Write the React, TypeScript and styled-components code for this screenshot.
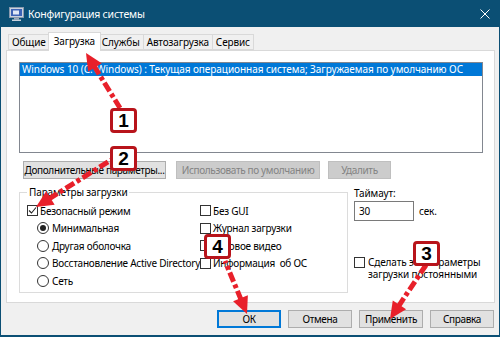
import styled, { createGlobalStyle } from "styled-components";

const GlobalStyle = createGlobalStyle`
  html, body {
    margin: 0;
    padding: 0;
    background: #ffffff;
  }
  body {
    font-family: "Noto Sans", "DejaVu Sans", sans-serif;
  }
`;

const RED = "#e8202a";

type ArrowProps = { x1: number; y1: number; x2: number; y2: number };

function Arrow({ x1, y1, x2, y2 }: ArrowProps) {
  const dx = x2 - x1;
  const dy = y2 - y1;
  const len = Math.hypot(dx, dy);
  const ux = dx / len;
  const uy = dy / len;
  const head = 17;
  const half = 8;
  const bx = x2 - ux * head;
  const by = y2 - uy * head;
  const px = -uy;
  const py = ux;
  return (
    <g>
      <line
        x1={bx + ux * 2}
        y1={by + uy * 2}
        x2={x1}
        y2={y1}
        stroke={RED}
        strokeWidth={5}
        strokeDasharray="10 3 4 3"
      />
      <polygon
        points={`${x2},${y2} ${bx + px * half},${by + py * half} ${bx - px * half},${by - py * half}`}
        fill={RED}
      />
    </g>
  );
}

function CheckBox({ checked }: { checked?: boolean }) {
  return (
    <Box>
      {checked && (
        <svg width="9" height="9" viewBox="0 0 9 9">
          <path d="M1 4.5 L3.5 7 L8 1.5" fill="none" stroke="#222" strokeWidth="1.1" />
        </svg>
      )}
    </Box>
  );
}

function Radio({ checked }: { checked?: boolean }) {
  return <Round>{checked && <Dot />}</Round>;
}

export default function App() {
  return (
    <>
      <GlobalStyle />
      <Window>
        <TitleBar>
          <svg width="15" height="14" viewBox="0 0 15 14">
            <rect x="0.5" y="0.5" width="14" height="10" fill="#c9d3de" stroke="#8a9aae" />
            <rect x="2" y="2" width="11" height="7" fill="#3d63b5" />
            <rect x="4" y="3.5" width="6" height="4" fill="#dfe8f6" />
            <rect x="5" y="11" width="5" height="1.5" fill="#9aa8b8" />
            <rect x="3" y="12.5" width="9" height="1.5" fill="#c9d3de" />
          </svg>
          <Title>Конфигурация системы</Title>
          <svg width="10" height="10" viewBox="0 0 10 10">
            <path d="M0.5 0.5 L9.5 9.5 M9.5 0.5 L0.5 9.5" stroke="#ffffff" strokeWidth="1" />
          </svg>
        </TitleBar>
        <Body>
          <TabStrip>
            <Tab>Общие</Tab>
            <Tab $active>Загрузка</Tab>
            <Tab>Службы</Tab>
            <Tab>Автозагрузка</Tab>
            <Tab>Сервис</Tab>
          </TabStrip>
          <Panel>
            <ListBox>
              <ListRow>
                Windows 10 (C:\Windows) : Текущая операционная система; Загружаемая по умолчанию ОС
              </ListRow>
            </ListBox>
            <ButtonRow>
              <Button $width={143}>Дополнительные параметры...</Button>
              <Button $width={144} disabled>
                Использовать по умолчанию
              </Button>
              <Button $width={63} disabled>
                Удалить
              </Button>
            </ButtonRow>
            <LowerRow>
              <GroupBox>
                <Legend>Параметры загрузки</Legend>
                <GroupColumns>
                  <Column>
                    <OptionRow>
                      <CheckBox checked />
                      <Label>Безопасный режим</Label>
                    </OptionRow>
                    <OptionRow $indent>
                      <Radio checked />
                      <Label $gap>Минимальная</Label>
                    </OptionRow>
                    <OptionRow $indent>
                      <Radio />
                      <Label $gap>Другая оболочка</Label>
                    </OptionRow>
                    <OptionRow $indent>
                      <Radio />
                      <Label $gap>Восстановление Active Directory</Label>
                    </OptionRow>
                    <OptionRow $indent>
                      <Radio />
                      <Label $gap>Сеть</Label>
                    </OptionRow>
                  </Column>
                  <Column>
                    <OptionRow>
                      <CheckBox />
                      <Label>Без GUI</Label>
                    </OptionRow>
                    <OptionRow>
                      <CheckBox />
                      <Label>Журнал загрузки</Label>
                    </OptionRow>
                    <OptionRow>
                      <CheckBox />
                      <Label>Базовое видео</Label>
                    </OptionRow>
                    <OptionRow>
                      <CheckBox />
                      <Label>Информация&nbsp; об ОС</Label>
                    </OptionRow>
                  </Column>
                </GroupColumns>
              </GroupBox>
              <SideColumn>
                <FieldLabel>Таймаут:</FieldLabel>
                <TimeoutRow>
                  <TextInput>30</TextInput>
                  <span>сек.</span>
                </TimeoutRow>
                <PermanentRow>
                  <CheckBox />
                  <MultiLabel>
                    Сделать эти параметры
                    <br />
                    загрузки постоянными
                  </MultiLabel>
                </PermanentRow>
              </SideColumn>
            </LowerRow>
          </Panel>
          <Footer>
            <Button $width={64} $default>
              ОК
            </Button>
            <Button $width={64}>Отмена</Button>
            <Button $width={64}>Применить</Button>
            <Button $width={64}>Справка</Button>
          </Footer>
        </Body>

        <Overlay width="500" height="337" viewBox="0 0 500 337">
          <Arrow x1={120} y1={108} x2={86} y2={53} />
          <Arrow x1={111} y1={160} x2={36} y2={207} />
          <Arrow x1={225} y1={261} x2={247} y2={314} />
          <Arrow x1={426} y1={265} x2={390} y2={319} />
        </Overlay>
        <Badge $x={110} $y={108}>1</Badge>
        <Badge $x={110} $y={146}>2</Badge>
        <Badge $x={413} $y={241}>3</Badge>
        <Badge $x={204} $y={234}>4</Badge>
      </Window>
    </>
  );
}

const Window = styled.div`
  position: relative;
  width: 500px;
  height: 337px;
  box-sizing: border-box;
  border: 1px solid #0b4f74;
  border-top: none;
  border-bottom-width: 2px;
  background: #f0f0f0;
  display: flex;
  flex-direction: column;
  font-size: 10px;
  letter-spacing: -0.12px;
  color: #000;
  overflow: hidden;
`;

const TitleBar = styled.div`
  height: 27px;
  flex-shrink: 0;
  background: #0b4f74;
  display: flex;
  align-items: center;
  padding: 0 9px 0 8px;
  color: #ffffff;
`;

const Title = styled.span`
  margin-left: 4px;
  font-size: 10.5px;
  letter-spacing: -0.2px;
  flex: 1;
`;

const Body = styled.div`
  flex: 1;
  display: flex;
  flex-direction: column;
  padding: 5px 4px 0 5px;
`;

const TabStrip = styled.div`
  display: flex;
  align-items: flex-end;
  height: 18px;
  padding-left: 2px;
  position: relative;
  z-index: 1;
`;

const Tab = styled.div<{ $active?: boolean }>`
  box-sizing: border-box;
  height: ${(p) => (p.$active ? "19px" : "16px")};
  margin: ${(p) => (p.$active ? "0 -2px -1px" : "0")};
  padding: ${(p) => (p.$active ? "1px 5px 0" : "0 3px")};
  background: ${(p) => (p.$active ? "#ffffff" : "#f0f0f0")};
  border: 1px solid #d9d9d9;
  border-bottom: ${(p) => (p.$active ? "none" : "1px solid #d9d9d9")};
  border-left-width: ${(p) => (p.$active ? "1px" : "0")};
  line-height: 14px;
  white-space: nowrap;
  position: relative;
  z-index: ${(p) => (p.$active ? 2 : 1)};

  &:first-child {
    border-left-width: 1px;
  }
`;

const Panel = styled.div`
  box-sizing: border-box;
  height: 253px;
  background: #ffffff;
  border: 1px solid #d9d9d9;
  padding: 11px 11px 0 12px;
`;

const ListBox = styled.div`
  box-sizing: border-box;
  height: 91px;
  border: 1px solid #828790;
  background: #ffffff;
`;

const ListRow = styled.div`
  height: 13px;
  line-height: 13px;
  background: #0078d7;
  color: #ffffff;
  padding-left: 2px;
  letter-spacing: -0.05px;
  white-space: nowrap;
  overflow: hidden;
`;

const ButtonRow = styled.div`
  display: flex;
  gap: 10px;
  margin-top: 8px;
  padding-left: 4px;

  & > button:last-child {
    margin-left: -2px;
  }
`;

const Footer = styled.div`
  display: flex;
  justify-content: flex-end;
  gap: 7px;
  margin-top: 7px;
  padding-right: 1px;
`;

const Button = styled.button<{ $width: number; $default?: boolean }>`
  box-sizing: border-box;
  width: ${(p) => p.$width}px;
  height: 18px;
  padding: 0;
  font-family: inherit;
  font-size: 10px;
  letter-spacing: -0.35px;
  color: #000;
  background: #e1e1e1;
  border: 1px solid ${(p) => (p.$default ? "#0078d7" : "#adadad")};
  box-shadow: ${(p) => (p.$default ? "inset 0 0 0 1px #0078d7" : "none")};
  white-space: nowrap;

  &:disabled {
    background: #cccccc;
    border-color: #bfbfbf;
    color: #838383;
  }
`;

const LowerRow = styled.div`
  display: flex;
  gap: 6px;
  margin-top: 7px;
`;

const GroupBox = styled.fieldset`
  box-sizing: border-box;
  width: 329px;
  height: 107px;
  margin: 0;
  padding: 0 0 0 7px;
  border: 1px solid #dcdcdc;
  min-width: 0;
`;

const Legend = styled.legend`
  padding: 0 2px;
  margin-left: 0;
  font-size: 10px;
  line-height: 12px;
`;

const GroupColumns = styled.div`
  display: grid;
  grid-template-columns: 173px 1fr;
  margin-top: 4px;
`;

const Column = styled.div`
  display: flex;
  flex-direction: column;
`;

const OptionRow = styled.div<{ $indent?: boolean }>`
  display: flex;
  align-items: center;
  height: 17.5px;
  margin-left: ${(p) => (p.$indent ? "10px" : "0")};
`;

const Box = styled.span`
  box-sizing: border-box;
  width: 11px;
  height: 11px;
  border: 1px solid #333333;
  background: #ffffff;
  display: inline-flex;
  align-items: center;
  justify-content: center;
  flex-shrink: 0;
`;

const Round = styled.span`
  box-sizing: border-box;
  width: 12px;
  height: 12px;
  border: 1px solid #333333;
  border-radius: 50%;
  background: #ffffff;
  display: inline-flex;
  align-items: center;
  justify-content: center;
  flex-shrink: 0;
`;

const Dot = styled.span`
  width: 6px;
  height: 6px;
  border-radius: 50%;
  background: #222222;
`;

const Label = styled.span<{ $gap?: boolean }>`
  margin-left: ${(p) => (p.$gap ? "3px" : "2px")};
  letter-spacing: -0.25px;
  white-space: nowrap;
`;

const SideColumn = styled.div`
  display: flex;
  flex-direction: column;
`;

const FieldLabel = styled.div`
  line-height: 14px;
`;

const TimeoutRow = styled.div`
  display: flex;
  align-items: center;
  gap: 5px;
  margin-top: 1px;
`;

const TextInput = styled.div`
  box-sizing: border-box;
  width: 60px;
  height: 20px;
  border: 1px solid #7a7a7a;
  background: #ffffff;
  padding-left: 4px;
  line-height: 18px;
`;

const PermanentRow = styled.div`
  display: flex;
  align-items: flex-start;
  margin-top: 35px;

  & > span:first-child {
    margin-top: 1px;
  }
`;

const MultiLabel = styled.span`
  margin-left: 3px;
  line-height: 12px;
  white-space: nowrap;
`;

const Overlay = styled.svg`
  position: absolute;
  left: -1px;
  top: 0;
  pointer-events: none;
  z-index: 10;
`;

const Badge = styled.div<{ $x: number; $y: number }>`
  position: absolute;
  left: ${(p) => p.$x - 1}px;
  top: ${(p) => p.$y}px;
  z-index: 11;
  box-sizing: border-box;
  width: 27px;
  height: 25px;
  background: #ffffff;
  border: 3px solid #b8141b;
  border-radius: 4px;
  display: flex;
  align-items: center;
  justify-content: center;
  font-family: "Liberation Sans", Arial, sans-serif;
  font-weight: bold;
  font-size: 19px;
  color: #000;
`;
